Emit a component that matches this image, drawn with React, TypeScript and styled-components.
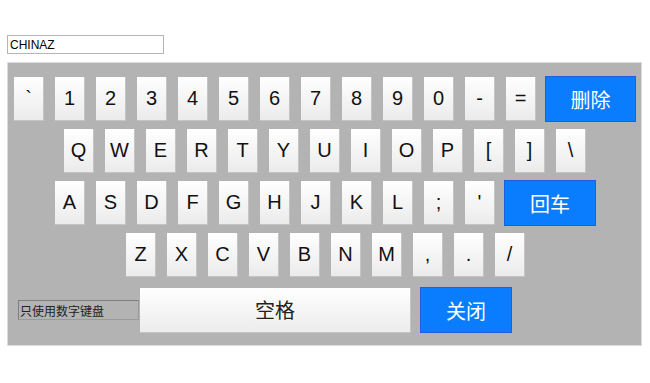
import React from "react";
import styled, { createGlobalStyle } from "styled-components";

const Global = createGlobalStyle`
  html, body { margin: 0; padding: 0; background: #fff; }
  body { font-family: "Liberation Sans", Arial, "Noto Sans CJK SC", sans-serif; }
  * { box-sizing: border-box; }
`;

const Page = styled.div`
  padding: 35px 0 0 7px;
`;

const TopInput = styled.input`
  display: block;
  width: 157px;
  height: 19px;
  border: 1px solid #b5b5b5;
  padding: 0 2px;
  font-family: "Liberation Sans", Arial, sans-serif;
  font-size: 12px;
  color: #000;
  outline: none;
  background: #fff;
`;

const Panel = styled.div`
  margin-top: 8px;
  width: 635px;
  height: 284px;
  background: #b3b3b3;
  border: 1px solid #dcdcdc;
  padding: 14px 0 0 0;
  display: flex;
  flex-direction: column;
`;

const Row = styled.div<{ $left: number; $top?: number }>`
  display: flex;
  align-items: center;
  height: 44px;
  margin-left: ${(p) => p.$left}px;
  margin-top: ${(p) => (p.$top ?? 8)}px;
  &:first-child { margin-top: 0; }
`;

const Key = styled.div`
  width: 30px;
  height: 44px;
  margin-right: 11px;
  flex: none;
  display: flex;
  align-items: center;
  justify-content: center;
  background: linear-gradient(#ffffff, #ebebeb);
  border-right: 1px solid #c4c4c4;
  border-bottom: 1px solid #c4c4c4;
  font-family: "Liberation Sans", Arial, sans-serif;
  font-size: 20px;
  color: #111;
`;

const BlueButton = styled.div<{ $w: number; $shift?: number }>`
  width: ${(p) => p.$w}px;
  height: 46px;
  flex: none;
  margin-left: ${(p) => p.$shift ?? 0}px;
  display: flex;
  align-items: center;
  justify-content: center;
  background: #0a7dff;
  border: 1px solid #1c5fdf;
  color: #fff;
  font-family: "Noto Sans CJK SC", sans-serif;
  font-size: 20px;
`;

const SpaceKey = styled.div`
  width: 271px;
  height: 45px;
  flex: none;
  display: flex;
  align-items: center;
  justify-content: center;
  background: linear-gradient(#ffffff, #ececec);
  border-right: 1px solid #c4c4c4;
  border-bottom: 1px solid #c4c4c4;
  font-family: "Noto Sans CJK SC", sans-serif;
  font-size: 20px;
  color: #222;
  margin-right: 9px;
`;

const NumOnly = styled.input`
  width: 121px;
  height: 20px;
  flex: none;
  margin-right: 1px;
  background: #b3b3b3;
  border: 1px solid #7e7e7e;
  border-right-color: #9a9a9a;
  border-bottom-color: #9a9a9a;
  padding: 0 1px;
  font-family: "Noto Sans CJK SC", sans-serif;
  font-size: 12px;
  color: #222;
  outline: none;
`;

const LastRow = styled(Row)`
  height: 46px;
`;

const row1 = ["`", "1", "2", "3", "4", "5", "6", "7", "8", "9", "0", "-", "="];
const row2 = ["Q", "W", "E", "R", "T", "Y", "U", "I", "O", "P", "[", "]", "\\"];
const row3 = ["A", "S", "D", "F", "G", "H", "J", "K", "L", ";", "'"];
const row4 = ["Z", "X", "C", "V", "B", "N", "M", ",", ".", "/"];

export default function App() {
  return (
    <Page>
      <Global />
      <TopInput defaultValue="CHINAZ" />
      <Panel>
        <Row $left={6}>
          {row1.map((k) => (
            <Key key={k}>{k}</Key>
          ))}
          <BlueButton $w={91} $shift={-2}>删除</BlueButton>
        </Row>
        <Row $left={56}>
          {row2.map((k) => (
            <Key key={k}>{k}</Key>
          ))}
        </Row>
        <Row $left={47}>
          {row3.map((k) => (
            <Key key={k}>{k}</Key>
          ))}
          <BlueButton $w={92} $shift={-2}>回车</BlueButton>
        </Row>
        <Row $left={118}>
          {row4.map((k) => (
            <Key key={k}>{k}</Key>
          ))}
        </Row>
        <LastRow $left={10} $top={10}>
          <NumOnly defaultValue="只使用数字键盘" />
          <SpaceKey>空格</SpaceKey>
          <BlueButton $w={92}>关闭</BlueButton>
        </LastRow>
      </Panel>
    </Page>
  );
}
